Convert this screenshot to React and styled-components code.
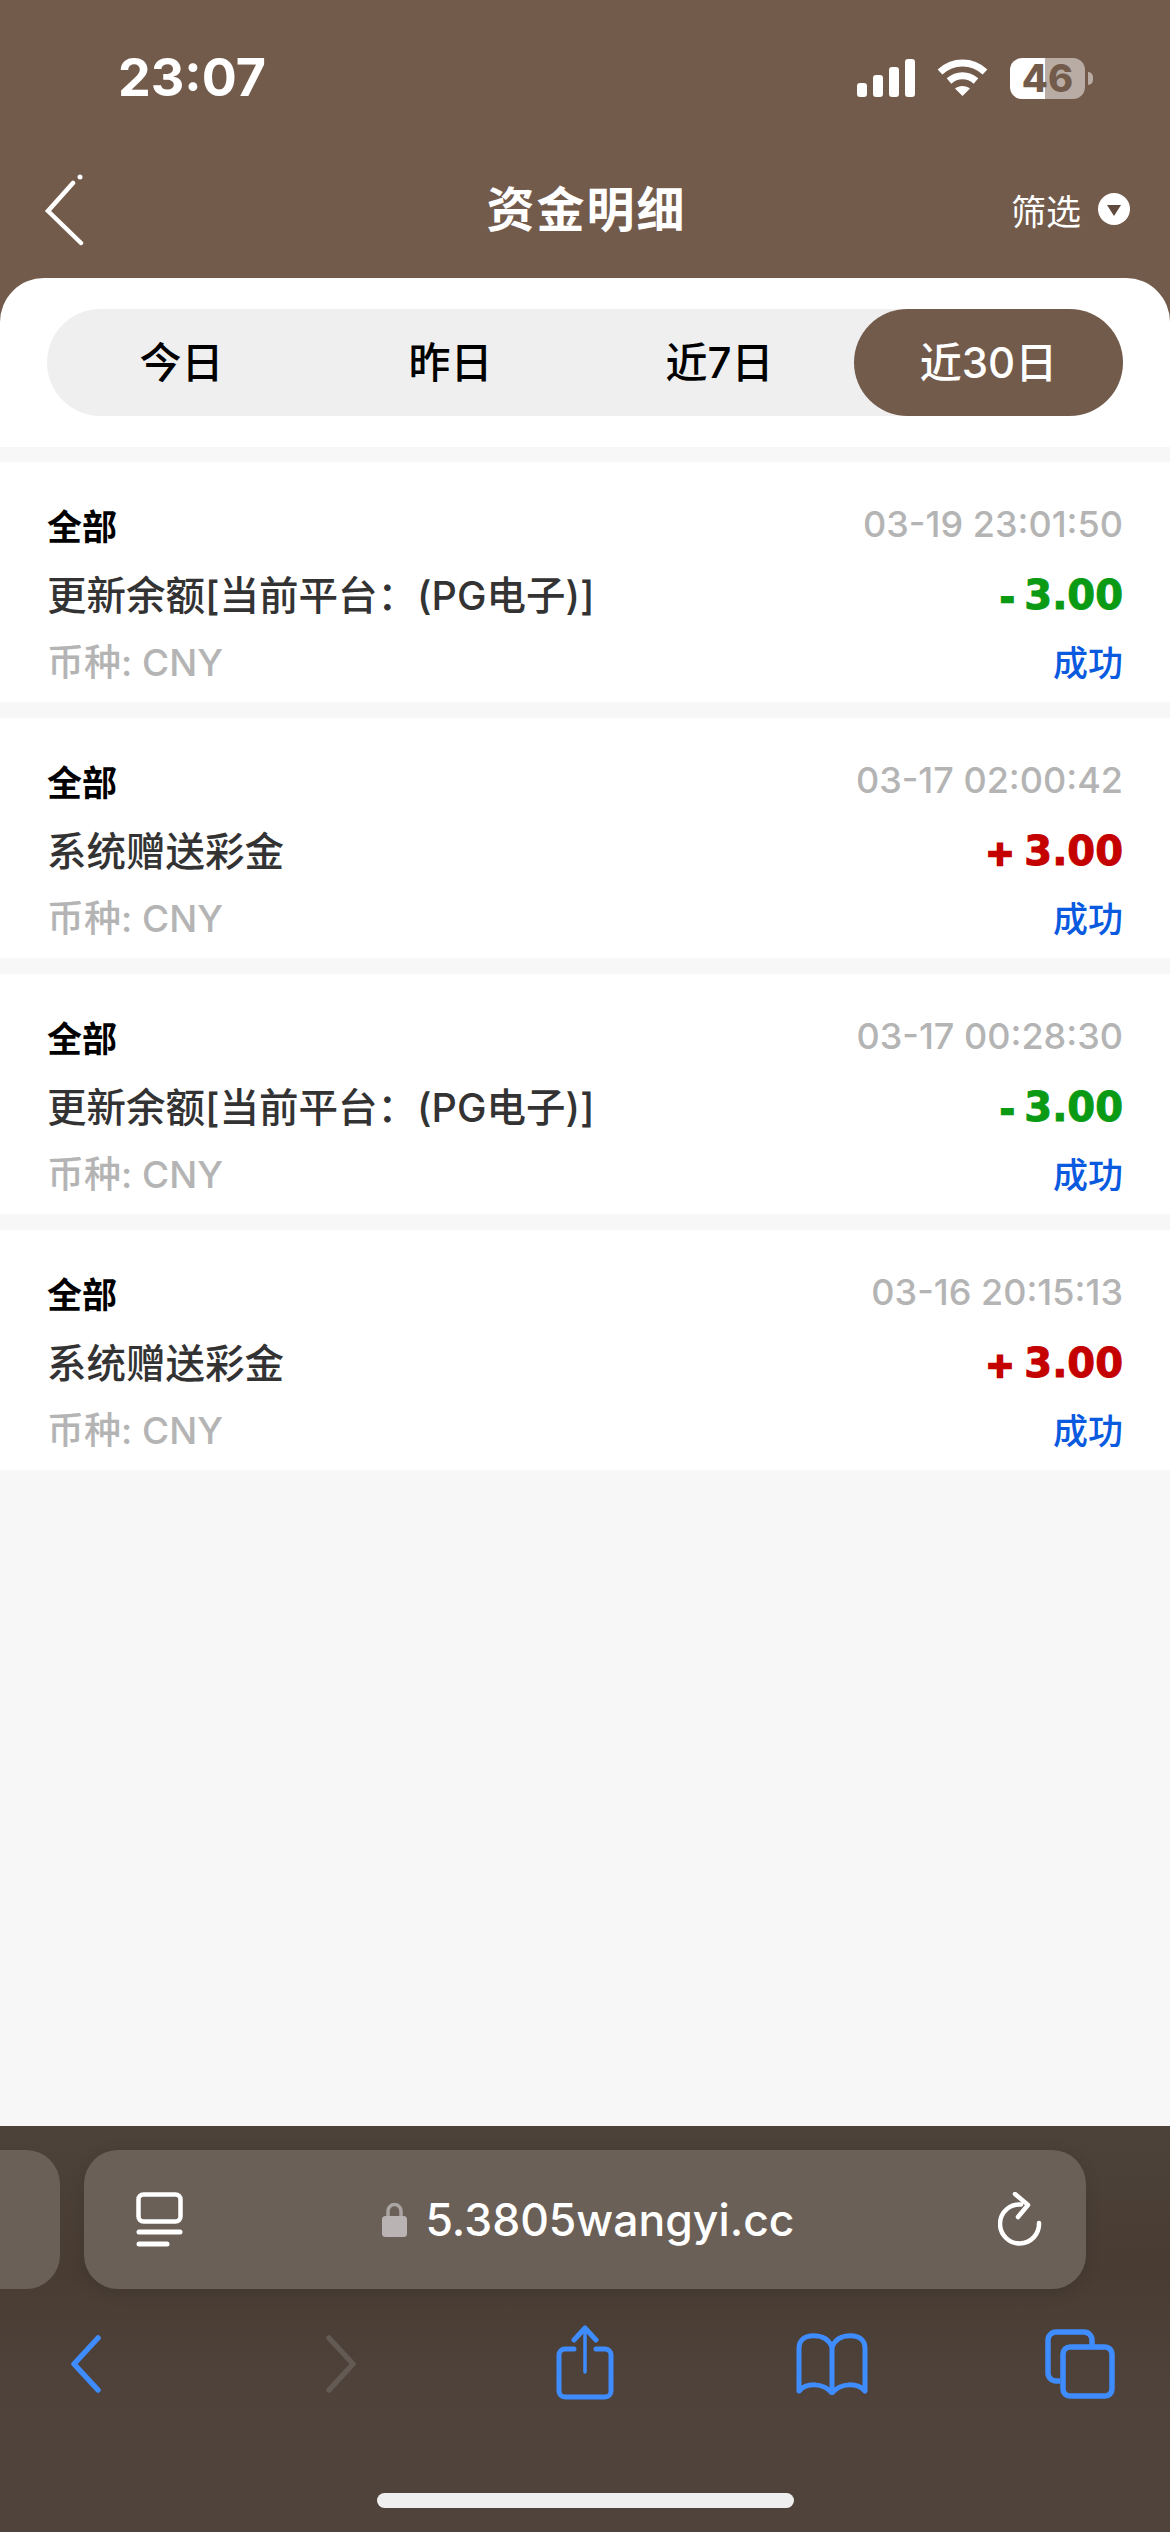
import React from "react";
import styled, { createGlobalStyle } from "styled-components";

const BROWN = "#735b4c";
const BLUE = "#3f8cff";
const CJK = `Inter, "Noto Sans CJK SC", sans-serif`;

const GlobalStyle = createGlobalStyle`
  html, body { margin: 0; padding: 0; background: ${BROWN}; }
  * { box-sizing: border-box; }
`;

const Page = styled.div`
  width: 1170px;
  height: 2532px;
  display: flex;
  flex-direction: column;
  background: ${BROWN};
  font-family: ${CJK};
  overflow: hidden;
`;

const StatusBar = styled.div`
  height: 156px;
  padding: 57px 85px 0 118px;
  display: flex;
  justify-content: space-between;
  align-items: flex-start;
`;

const Time = styled.div`
  font-size: 52px;
  line-height: 42px;
  font-weight: 700;
  color: #fff;
`;

const StatusIcons = styled.div`
  display: flex;
  align-items: center;
  gap: 22px;
  height: 42px;
`;

const Battery = styled.div`
  width: 75px;
  height: 41px;
  border-radius: 12px;
  background: linear-gradient(90deg, #fff 0 47%, #b9aca4 47% 100%);
  color: ${BROWN};
  font-family: Inter, sans-serif;
  font-size: 38px;
  font-weight: 800;
  line-height: 41px;
  text-align: center;
  position: relative;

  &::after {
    content: "";
    position: absolute;
    right: -8px;
    top: 14px;
    width: 5px;
    height: 13px;
    border-radius: 0 5px 5px 0;
    background: #b9aca4;
  }
`;

const NavBar = styled.div`
  height: 122px;
  padding: 18px 40px 0 43px;
  display: grid;
  grid-template-columns: 1fr auto 1fr;
  align-items: start;
`;

const NavTitle = styled.div`
  font-size: 48px;
  line-height: 72px;
  font-weight: 700;
  letter-spacing: 2px;
  color: #fff;
`;

const FilterButton = styled.div`
  display: flex;
  justify-content: flex-end;
  align-items: center;
  gap: 17px;
  height: 70px;
  font-size: 35px;
  color: #fff;
`;

const Sheet = styled.div`
  background: #fff;
  border-radius: 44px 44px 0 0;
  padding: 31px 47px;
`;

const Segment = styled.div`
  display: flex;
  height: 107px;
  border-radius: 54px;
  background: #efefef;
`;

const SegmentItem = styled.div`
  flex: 1;
  display: flex;
  align-items: center;
  justify-content: center;
  padding-bottom: 6px;
  border-radius: 54px;
  font-size: 42px;
  font-weight: 500;
  color: ${(p) => (p.$active ? "#fff" : "#000")};
  background: ${(p) => (p.$active ? BROWN : "transparent")};
`;

const List = styled.div`
  flex: 1;
  display: flex;
  flex-direction: column;
  gap: 16px;
  padding-top: 15px;
  background: #f7f7f7;
`;

const Card = styled.div`
  height: 240px;
  padding: 28px 47px 8px;
  background: #fff;
`;

const Row = styled.div`
  height: 68px;
  display: flex;
  justify-content: space-between;
  align-items: center;
`;

const Kind = styled.span`
  font-size: 35px;
  font-weight: 700;
  color: #000;
`;

const Stamp = styled.span`
  font-size: 36px;
  font-weight: 500;
  color: #b4b4b4;
`;

const Desc = styled.span`
  font-size: 39.5px;
  font-weight: 500;
  color: #333;
`;

const Amount = styled.span`
  font-family: "DejaVu Sans", sans-serif;
  font-size: 40px;
  font-weight: 700;
  -webkit-text-stroke: 1px currentColor;
  position: relative;
  top: 3px;
  color: ${(p) => (p.$plus ? "#c40000" : "#0a9a14")};
`;

const Sign = styled.span`
  font-size: 34px;
  margin-right: 10px;
  -webkit-text-stroke: 2.5px currentColor;
`;

const Currency = styled.span`
  font-size: 37px;
  font-weight: 500;
  color: #b4b4b4;
`;

const Status = styled.span`
  font-size: 35px;
  font-weight: 500;
  color: #0a5ae0;
`;

const BottomBar = styled.div`
  height: 406px;
  background: linear-gradient(180deg, #4d4239 0%, #483c33 35%, #4f433b 70%);
  padding-top: 24px;
  display: flex;
  flex-direction: column;
`;

const TabStrip = styled.div`
  display: flex;
  gap: 24px;
  height: 139px;
  margin-left: -60px;
`;

const PrevTab = styled.div`
  width: 120px;
  border-radius: 34px;
  background: #6b6057;
`;

const UrlBar = styled.div`
  width: 1002px;
  padding: 0 42px 0 52px;
  display: flex;
  align-items: center;
  justify-content: space-between;
  border-radius: 34px;
  background: #6b6057;
  box-shadow: 0 4px 16px rgba(0, 0, 0, 0.1);
`;

const Address = styled.div`
  display: flex;
  align-items: center;
  gap: 18px;
  margin-right: 4px;
  font-size: 44.5px;
  font-weight: 500;
  color: #fff;
`;

const Toolbar = styled.div`
  display: flex;
  align-items: flex-start;
  padding: 36px 0 0 70px;
  height: 204px;
`;

const ToolIcon = styled.svg`
  display: block;
  flex: none;
  margin-left: ${(p) => p.$gap || 0}px;
  margin-top: ${(p) => p.$top || 0}px;
`;

const HomeIndicator = styled.div`
  width: 417px;
  height: 15px;
  margin: 0 auto;
  border-radius: 8px;
  background: #efefef;
`;

const records = [
  { time: "03-19 23:01:50", desc: "更新余额[当前平台：(PG电子)]", plus: false },
  { time: "03-17 02:00:42", desc: "系统赠送彩金", plus: true },
  { time: "03-17 00:28:30", desc: "更新余额[当前平台：(PG电子)]", plus: false },
  { time: "03-16 20:15:13", desc: "系统赠送彩金", plus: true },
];

const tabs = ["今日", "昨日", "近7日", "近30日"];

const SignalIcon = () => (
  <svg width="58" height="38" viewBox="0 0 58 38" fill="#fff">
    <rect x="0" y="24" width="10" height="14" rx="3" />
    <rect x="16" y="16" width="10" height="22" rx="3" />
    <rect x="32" y="8" width="10" height="30" rx="3" />
    <rect x="48" y="0" width="10" height="38" rx="3" />
  </svg>
);

const WifiIcon = () => (
  <svg width="51" height="38" viewBox="0 0 51 38" fill="none" stroke="#fff" strokeWidth="7">
    <path d="M3 13 C16 1 35 1 48 13" />
    <path d="M12 22 C20 15 31 15 39 22" />
    <path d="M25.5 37 L18 29.5 C22 26 29 26 33 29.5 Z" fill="#fff" stroke="none" />
  </svg>
);

const BackIcon = () => (
  <svg width="44" height="72" viewBox="0 0 44 72" fill="none" stroke="#fff" strokeWidth="4.5" strokeLinecap="round">
    <path d="M30 9 L5 37 L38 69" />
    <circle cx="37" cy="3" r="2.5" fill="#fff" stroke="none" />
  </svg>
);

const FilterIcon = () => (
  <svg width="32" height="32" viewBox="0 0 32 32">
    <circle cx="16" cy="16" r="16" fill="#fff" />
    <path d="M9 12 H23 L16 23 Z" fill="#5f4a3d" />
  </svg>
);

const SidebarIcon = () => (
  <svg width="47" height="55" viewBox="0 0 47 55" fill="none" stroke="#fff" strokeWidth="4.5" strokeLinecap="round">
    <rect x="2.5" y="2.5" width="42" height="27" rx="5" />
    <path d="M3 40 H44" strokeWidth="5" />
    <path d="M3 52 H31" strokeWidth="5" />
  </svg>
);

const LockIcon = () => (
  <svg width="25" height="35" viewBox="0 0 25 35">
    <path d="M6 16 V9 a6.5 6.5 0 0 1 13 0 V16" fill="none" stroke="#aaa4a2" strokeWidth="3.5" />
    <rect x="0" y="14" width="25" height="21" rx="3.5" fill="#b9b3b3" />
  </svg>
);

const ReloadIcon = () => (
  <svg width="46" height="56" viewBox="0 0 46 56" fill="none" stroke="#fff" strokeWidth="4.5" strokeLinecap="round" strokeLinejoin="round">
    <path d="M41 31 A19.5 19.5 0 1 1 23 12.5" />
    <path d="M17 2 L30 13 L20 25" />
  </svg>
);

function App() {
  return (
    <Page>
      <GlobalStyle />
      <StatusBar>
        <Time>23:07</Time>
        <StatusIcons>
          <SignalIcon />
          <WifiIcon />
          <Battery>46</Battery>
        </StatusIcons>
      </StatusBar>
      <NavBar>
        <BackIcon />
        <NavTitle>资金明细</NavTitle>
        <FilterButton>
          筛选
          <FilterIcon />
        </FilterButton>
      </NavBar>
      <Sheet>
        <Segment>
          {tabs.map((t, i) => (
            <SegmentItem key={t} $active={i === 3}>
              {t}
            </SegmentItem>
          ))}
        </Segment>
      </Sheet>
      <List>
        {records.map((r) => (
          <Card key={r.time}>
            <Row>
              <Kind>全部</Kind>
              <Stamp>{r.time}</Stamp>
            </Row>
            <Row>
              <Desc>{r.desc}</Desc>
              <Amount $plus={r.plus}>
                <Sign>{r.plus ? "+" : "-"}</Sign>3.00
              </Amount>
            </Row>
            <Row>
              <Currency>币种: CNY</Currency>
              <Status>成功</Status>
            </Row>
          </Card>
        ))}
      </List>
      <BottomBar>
        <TabStrip>
          <PrevTab />
          <UrlBar>
            <SidebarIcon />
            <Address>
              <LockIcon />
              5.3805wangyi.cc
            </Address>
            <ReloadIcon />
          </UrlBar>
        </TabStrip>
        <Toolbar>
          <ToolIcon width="32" height="58" viewBox="0 0 32 58" $top={10} fill="none" stroke={BLUE} strokeWidth="5.5" strokeLinecap="round" strokeLinejoin="round">
            <path d="M28 3 L4 29 L28 55" />
          </ToolIcon>
          <ToolIcon width="32" height="58" viewBox="0 0 32 58" $gap={223} $top={10} fill="none" stroke="#635a53" strokeWidth="5.5" strokeLinecap="round" strokeLinejoin="round">
            <path d="M4 3 L28 29 L4 55" />
          </ToolIcon>
          <ToolIcon width="58" height="75" viewBox="0 0 58 75" $gap={199} fill="none" stroke={BLUE} strokeWidth="5" strokeLinecap="round" strokeLinejoin="round">
            <path d="M18 24 H9 a6 6 0 0 0 -6 6 V66 a6 6 0 0 0 6 6 H49 a6 6 0 0 0 6 -6 V30 a6 6 0 0 0 -6 -6 H40" />
            <path d="M29 3 V47" strokeWidth="3.5" />
            <path d="M18 15 L29 3 L40 15" />
          </ToolIcon>
          <ToolIcon width="72" height="62" viewBox="0 0 72 62" $gap={182} $top={8} fill="none" stroke={BLUE} strokeWidth="5" strokeLinecap="round" strokeLinejoin="round">
            <path d="M36 14 C32 4 22 2 14 3 C7 4 3 9 3 15 V58 C10 50 27 49 36 60 C45 49 62 50 69 58 V15 C69 9 65 4 58 3 C50 2 40 4 36 14 Z" />
            <path d="M36 14 V58" />
          </ToolIcon>
          <ToolIcon width="70" height="70" viewBox="0 0 70 70" $gap={177} $top={4} fill="none" stroke={BLUE} strokeWidth="5.5" strokeLinejoin="round">
            <path d="M15 52 H11 a8 8 0 0 1 -8 -8 V11 a8 8 0 0 1 8 -8 H39 a8 8 0 0 1 8 8 V16" />
            <rect x="18" y="18" width="49" height="49" rx="7" />
          </ToolIcon>
        </Toolbar>
        <HomeIndicator />
      </BottomBar>
    </Page>
  );
}

export default App;
